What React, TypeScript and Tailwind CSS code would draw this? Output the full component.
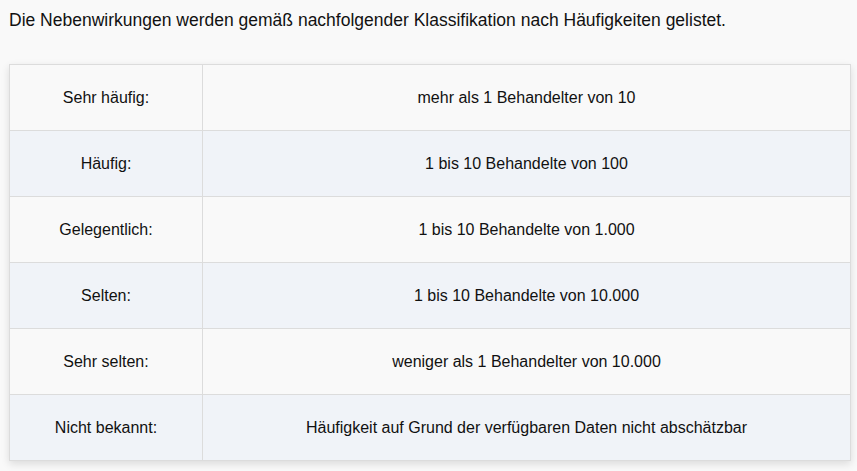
const rows = [
  ["Sehr häufig:", "mehr als 1 Behandelter von 10"],
  ["Häufig:", "1 bis 10 Behandelte von 100"],
  ["Gelegentlich:", "1 bis 10 Behandelte von 1.000"],
  ["Selten:", "1 bis 10 Behandelte von 10.000"],
  ["Sehr selten:", "weniger als 1 Behandelter von 10.000"],
  ["Nicht bekannt:", "Häufigkeit auf Grund der verfügbaren Daten nicht abschätzbar"],
]

export default function App() {
  return (
    <main className="min-h-[471px] bg-[#f9f9f9] px-[9px] pt-[8px] pb-3 font-['Liberation_Sans',Arial,sans-serif] text-[#111]">
      <p className="text-[17.5px] leading-6 mb-[32px]">
        Die Nebenwirkungen werden gemäß nachfolgender Klassifikation nach Häufigkeiten gelistet.
      </p>

      <table className="w-[842px] border-collapse text-[16px] shadow-[0_3px_8px_rgba(0,0,0,0.12)]">
        <tbody>
          {rows.map(([label, value], i) => (
            <tr key={label} className={i % 2 === 1 ? "bg-[#f0f3f8]" : "bg-[#f9f9f9]"}>
              <td className="w-[193px] h-[66px] border border-[#dcdcdc] text-center align-middle">{label}</td>
              <td className="h-[66px] border border-[#dcdcdc] text-center align-middle">{value}</td>
            </tr>
          ))}
        </tbody>
      </table>
    </main>
  )
}
